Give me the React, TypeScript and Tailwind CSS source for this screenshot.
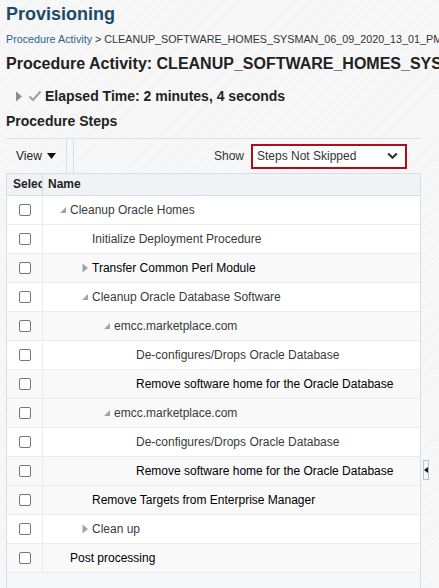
import React from 'react';

type Step = {
  name: string;
  level: number;
  toggle?: 'open' | 'closed';
  dark?: boolean;
  white?: boolean;
};

const steps: Step[] = [
  { name: 'Cleanup Oracle Homes', level: 0, toggle: 'open', white: true },
  { name: 'Initialize Deployment Procedure', level: 1, white: true },
  { name: 'Transfer Common Perl Module', level: 1, toggle: 'closed', dark: true },
  { name: 'Cleanup Oracle Database Software', level: 1, toggle: 'open', white: true },
  { name: 'emcc.marketplace.com', level: 2, toggle: 'open' },
  { name: 'De-configures/Drops Oracle Database', level: 3, white: true },
  { name: 'Remove software home for the Oracle Database', level: 3, dark: true },
  { name: 'emcc.marketplace.com', level: 2, toggle: 'open' },
  { name: 'De-configures/Drops Oracle Database', level: 3, white: true },
  { name: 'Remove software home for the Oracle Database', level: 3, dark: true },
  { name: 'Remove Targets from Enterprise Manager', level: 1, dark: true },
  { name: 'Clean up', level: 1, toggle: 'closed', white: true },
  { name: 'Post processing', level: 0, dark: true },
];

const indent = ['pl-[16px]', 'pl-[38px]', 'pl-[60px]', 'pl-[82px]'];

function Toggle({ kind }: { kind: 'open' | 'closed' }) {
  if (kind === 'open') {
    return (
      <svg width="8" height="8" viewBox="0 0 8 8" className="shrink-0">
        <polygon points="7,1 7,7 1,7" fill="#a3a3a3" />
      </svg>
    );
  }
  return (
    <svg width="8" height="10" viewBox="0 0 8 10" className="shrink-0">
      <polygon points="1.5,0.5 7,5 1.5,9.5" fill="#a3a3a3" />
    </svg>
  );
}

function Checkbox() {
  return <div className="w-[12px] h-[12px] border border-[#767676] rounded-[2px] bg-white" />;
}

export default function App() {
  return (
    <div
      className="w-[439px] h-[588px] overflow-hidden flex flex-col text-[#333] bg-[#f6f6f6] bg-[repeating-linear-gradient(135deg,#f3f3f3_0px,#f3f3f3_1px,#f8f8f8_1px,#f8f8f8_3px)]"
      style={{ fontFamily: '"Liberation Sans", Arial, sans-serif' }}
    >
      <div className="pl-[6px] whitespace-nowrap">
        <h1 className="pt-[3px] text-[18px] leading-[22px] font-bold text-[#1c4a66]">Provisioning</h1>
        <p className="mt-[7px] text-[10.75px] leading-[14px]">
          <span className="text-[#2b6391]">Procedure Activity</span>
          <span className="text-[#333]"> &gt; CLEANUP_SOFTWARE_HOMES_SYSMAN_06_09_2020_13_01_PM</span>
        </p>
        <h2 className="mt-[8px] text-[16px] leading-[20px] font-bold text-[#222]">
          Procedure Activity: CLEANUP_SOFTWARE_HOMES_SYSMAN_06_09_2020_13_01_PM
        </h2>
        <div className="mt-[13px] h-[18px] flex items-center">
          <svg width="8" height="11" viewBox="0 0 8 11" className="ml-[9px]">
            <polygon points="1,0.5 7,5.5 1,10.5" fill="#8c8c8c" />
          </svg>
          <svg width="14" height="12" viewBox="0 0 14 12" className="ml-[5px]">
            <path d="M1.5 6.5 L5 10 L12.5 1.5" fill="none" stroke="#a0a0a0" strokeWidth="2.2" />
          </svg>
          <span className="ml-[3px] text-[14px] font-bold text-[#222]">Elapsed Time: 2 minutes, 4 seconds</span>
        </div>
        <h3 className="mt-[7px] text-[14px] leading-[18px] font-bold text-[#222]">Procedure Steps</h3>
      </div>

      <div className="mt-[8px] ml-[6px] w-[415px] h-[35px] border-t border-[#d9e1e8] flex items-center">
        <div className="flex items-center gap-[5px] pl-[10px] w-[60px] text-[12px] text-[#222]">
          <span>View</span>
          <svg width="9" height="6" viewBox="0 0 9 6">
            <polygon points="0,0 9,0 4.5,6" fill="#111" />
          </svg>
        </div>
        <div className="self-stretch w-[8px] border-x border-[#d9e1e8]" />
        <div className="flex-1 flex items-center justify-end pr-[14px]">
          <span className="text-[12px] text-[#333] mr-[7px]">Show</span>
          <div className="w-[156px] h-[25px] border-2 border-[#b00d1c] bg-white flex items-center justify-between pl-[4px] pr-[7px]">
            <span className="text-[12px] text-[#333]">Steps Not Skipped</span>
            <svg width="11" height="8" viewBox="0 0 11 8">
              <path d="M1.2 1.5 L5.5 5.8 L9.8 1.5" fill="none" stroke="#333" strokeWidth="2.2" />
            </svg>
          </div>
        </div>
      </div>

      <div className="flex flex-1 min-h-0">
        <div className="ml-[6px] w-[415px] border-x border-[#d6dfe6] bg-[#f5f7fa] flex flex-col">
          <div className="flex h-[23px] bg-[#f0f2f5] border-y border-[#d6dfe6] text-[12px] font-bold text-[#222]">
            <div className="w-[36px] border-r border-[#d6dfe6] pl-[6px] overflow-hidden whitespace-nowrap leading-[21px]">
              Select
            </div>
            <div className="pl-[5px] leading-[21px]">Name</div>
          </div>
          {steps.map((s, i) => (
            <div
              key={i}
              className={
                'flex h-[29px] border-b border-[#ececec] text-[12px] ' +
                (s.white ? 'bg-white' : 'bg-[#f9f9f9]')
              }
            >
              <div className="w-[36px] border-r border-[#ececec] flex items-center justify-center">
                <Checkbox />
              </div>
              <div className={'flex items-center whitespace-nowrap ' + indent[s.level]}>
                <div className="w-[11px] flex items-center">{s.toggle && <Toggle kind={s.toggle} />}</div>
                <span className={s.dark ? 'text-black' : 'text-[#3a3a3a]'}>{s.name}</span>
              </div>
            </div>
          ))}
        </div>
        <div className="flex-1 relative">
          <div className="absolute left-[2px] top-[287px] w-[6px] h-[20px] border border-[#b9c6cf] bg-[#f4f6f8] flex items-center justify-center">
            <svg width="4" height="6" viewBox="0 0 4 6">
              <polygon points="4,0 4,6 0,3" fill="#111" />
            </svg>
          </div>
        </div>
      </div>
    </div>
  );
}
